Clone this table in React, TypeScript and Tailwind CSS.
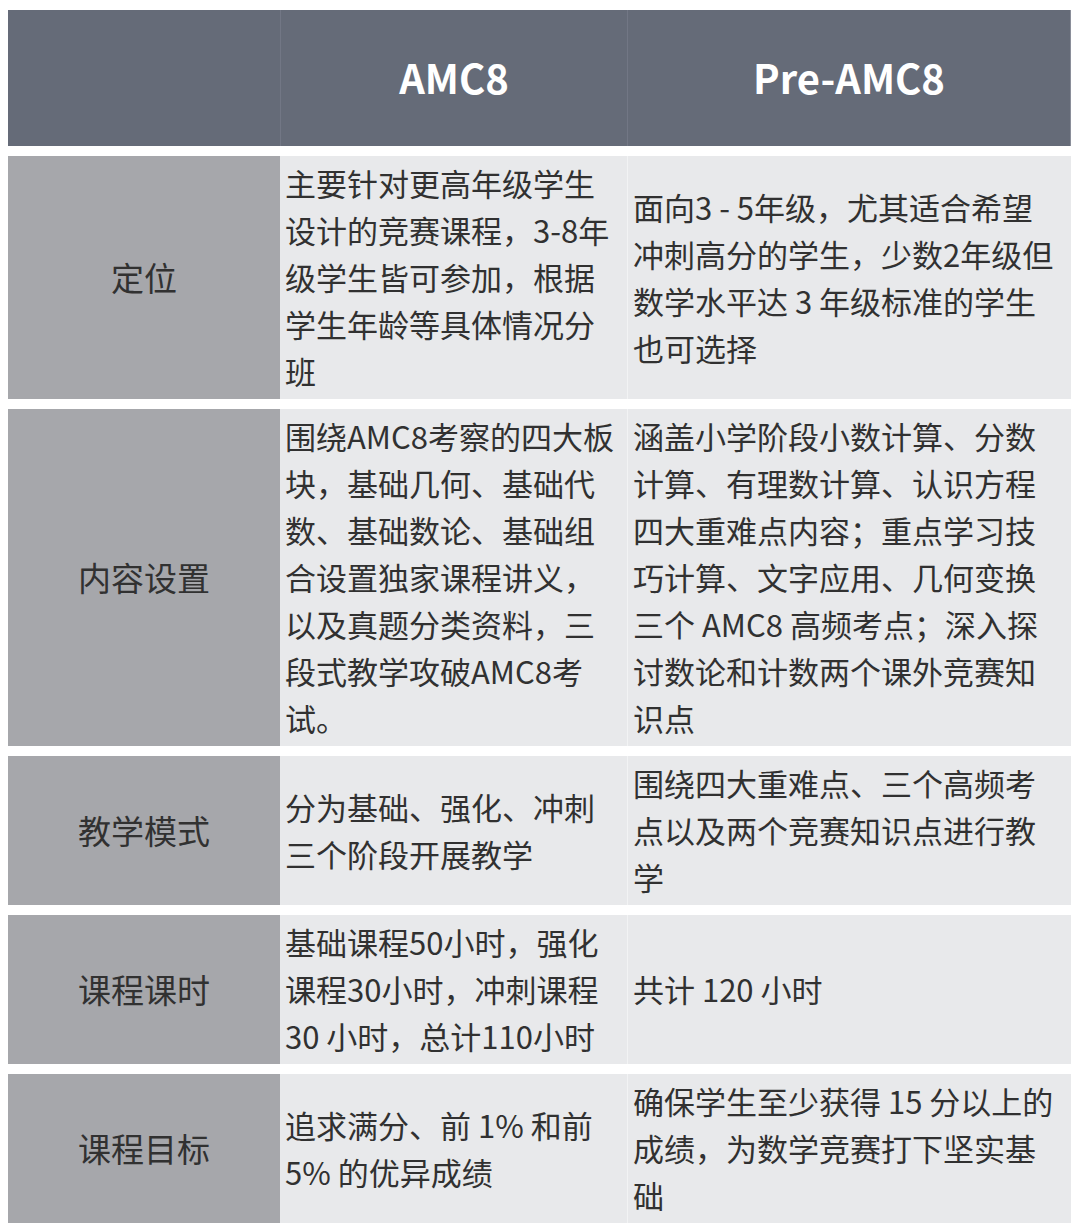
const rows: { label: string; amc8: string[]; pre: string[] }[] = [
  {
    label: "定位",
    amc8: [
      "主要针对更高年级学生",
      "设计的竞赛课程，3-8年",
      "级学生皆可参加，根据",
      "学生年龄等具体情况分",
      "班",
    ],
    pre: [
      "面向3 - 5年级，尤其适合希望",
      "冲刺高分的学生，少数2年级但",
      "数学水平达 3 年级标准的学生",
      "也可选择",
    ],
  },
  {
    label: "内容设置",
    amc8: [
      "围绕AMC8考察的四大板",
      "块，基础几何、基础代",
      "数、基础数论、基础组",
      "合设置独家课程讲义，",
      "以及真题分类资料，三",
      "段式教学攻破AMC8考",
      "试。",
    ],
    pre: [
      "涵盖小学阶段小数计算、分数",
      "计算、有理数计算、认识方程",
      "四大重难点内容；重点学习技",
      "巧计算、文字应用、几何变换",
      "三个 AMC8 高频考点；深入探",
      "讨数论和计数两个课外竞赛知",
      "识点",
    ],
  },
  {
    label: "教学模式",
    amc8: ["分为基础、强化、冲刺", "三个阶段开展教学"],
    pre: ["围绕四大重难点、三个高频考", "点以及两个竞赛知识点进行教", "学"],
  },
  {
    label: "课程课时",
    amc8: ["基础课程50小时，强化", "课程30小时，冲刺课程", "30 小时，总计110小时"],
    pre: ["共计 120 小时"],
  },
  {
    label: "课程目标",
    amc8: ["追求满分、前 1% 和前", "5% 的优异成绩"],
    pre: ["确保学生至少获得 15 分以上的", "成绩，为数学竞赛打下坚实基", "础"],
  },
];

function Lines({ lines }: { lines: string[] }) {
  return (
    <div className="whitespace-nowrap">
      {lines.map((l, i) => (
        <div key={i}>{l}</div>
      ))}
    </div>
  );
}

export default function App() {
  return (
    <div
      className="w-[1080px] h-[1227px] bg-white pt-[10px] pl-[8px] text-[#313131]"
      style={{ fontFamily: '"Noto Sans CJK SC", "Noto Sans", sans-serif' }}
    >
      <div className="w-[1063px] flex flex-col gap-[10px]">
        {/* Header */}
        <div className="grid grid-cols-[272px_347px_444px] h-[136px] bg-[#656b78] text-white font-bold text-[40px] leading-none">
          <div />
          <div className="flex items-center justify-center border-l border-[#727785] pb-[2px]">AMC8</div>
          <div className="flex items-center justify-center border-l border-[#727785] border-r border-r-[#8a8e99] pb-[2px]">
            Pre-AMC8
          </div>
        </div>

        {/* Body rows */}
        {rows.map((r) => (
          <div key={r.label} className="grid grid-cols-[272px_347px_444px] text-[31px] leading-[47px]">
            <div className="bg-[#a6a7ab] flex items-center justify-center text-[33px]">{r.label}</div>
            <div className="bg-[#e8e9eb] flex items-center pl-[5px] pt-[3px] pb-[5px]">
              <Lines lines={r.amc8} />
            </div>
            <div className="bg-[#e8e9eb] flex items-center pl-[5px] pt-[3px] pb-[5px] border-l border-[#f2f3f4]">
              <Lines lines={r.pre} />
            </div>
          </div>
        ))}
      </div>
    </div>
  );
}
